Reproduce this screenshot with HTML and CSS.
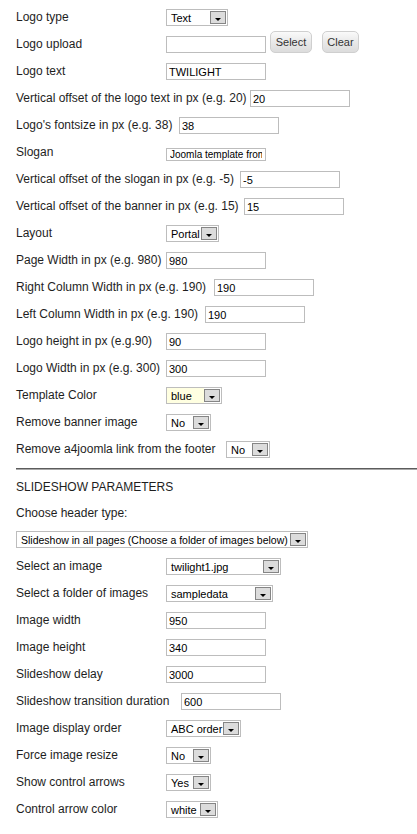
FILE: index.html
```html
<!DOCTYPE html>
<html>
<head>
<meta charset="utf-8">
<title>Template parameters</title>
<link rel="stylesheet" href="styles.css">
</head>
<body>
<form class="params">
  <div class="row"><label class="lbl">Logo type</label><div class="sel w62"><span class="val">Text</span><span class="arr"></span></div></div>
  <div class="row"><label class="lbl">Logo upload</label><input class="txt" type="text" value=""><button type="button" class="btn btn-select">Select</button><button type="button" class="btn btn-clear">Clear</button></div>
  <div class="row"><label class="lbl">Logo text</label><input class="txt" type="text" value="TWILIGHT"></div>
  <div class="row"><label class="lbl l230">Vertical offset of the logo text in px (e.g. 20)</label><input class="txt" type="text" value="20"></div>
  <div class="row"><label class="lbl l159">Logo's fontsize in px (e.g. 38)</label><input class="txt" type="text" value="38"></div>
  <div class="row"><label class="lbl">Slogan</label><input class="txt small" type="text" value="Joomla template from a4joomla"></div>
  <div class="row"><label class="lbl l220">Vertical offset of the slogan in px (e.g. -5)</label><input class="txt" type="text" value="-5"></div>
  <div class="row"><label class="lbl l224">Vertical offset of the banner in px (e.g. 15)</label><input class="txt" type="text" value="15"></div>
  <div class="row"><label class="lbl">Layout</label><div class="sel w53"><span class="val">Portal</span><span class="arr"></span></div></div>
  <div class="row"><label class="lbl">Page Width in px (e.g. 980)</label><input class="txt" type="text" value="980"></div>
  <div class="row"><label class="lbl l194">Right Column Width in px (e.g. 190)</label><input class="txt" type="text" value="190"></div>
  <div class="row"><label class="lbl l185">Left Column Width in px (e.g. 190)</label><input class="txt" type="text" value="190"></div>
  <div class="row"><label class="lbl">Logo height in px (e.g.90)</label><input class="txt" type="text" value="90"></div>
  <div class="row"><label class="lbl">Logo Width in px (e.g. 300)</label><input class="txt" type="text" value="300"></div>
  <div class="row"><label class="lbl">Template Color</label><div class="sel w56"><span class="val yellow">blue</span><span class="arr"></span></div></div>
  <div class="row"><label class="lbl">Remove banner image</label><div class="sel w45"><span class="val">No</span><span class="arr"></span></div></div>
  <div class="row"><label class="lbl l206">Remove a4joomla link from the footer</label><div class="sel w44"><span class="val">No</span><span class="arr"></span></div></div>
  <hr class="sep">
  <div class="row head"><span class="htxt">SLIDESHOW PARAMETERS</span></div>
  <div class="row head head2"><span class="htxt">Choose header type:</span></div>
  <div class="row"><div class="sel w292"><span class="val narrow">Slideshow in all pages (Choose a folder of images below)</span><span class="arr"></span></div></div>
  <div class="row"><label class="lbl">Select an image</label><div class="sel w115"><span class="val">twilight1.jpg</span><span class="arr"></span></div></div>
  <div class="row"><label class="lbl">Select a folder of images</label><div class="sel w107"><span class="val">sampledata</span><span class="arr"></span></div></div>
  <div class="row"><label class="lbl">Image width</label><input class="txt" type="text" value="950"></div>
  <div class="row"><label class="lbl">Image height</label><input class="txt" type="text" value="340"></div>
  <div class="row"><label class="lbl">Slideshow delay</label><input class="txt" type="text" value="3000"></div>
  <div class="row"><label class="lbl l161">Slideshow transition duration</label><input class="txt" type="text" value="600"></div>
  <div class="row"><label class="lbl">Image display order</label><div class="sel w75"><span class="val">ABC order</span><span class="arr"></span></div></div>
  <div class="row"><label class="lbl">Force image resize</label><div class="sel w45"><span class="val">No</span><span class="arr"></span></div></div>
  <div class="row"><label class="lbl">Show control arrows</label><div class="sel w45"><span class="val">Yes</span><span class="arr"></span></div></div>
  <div class="row"><label class="lbl">Control arrow color</label><div class="sel w52"><span class="val">white</span><span class="arr"></span></div></div>
</form>
</body>
</html>
```
FILE: styles.css
```css
html, body {
  margin: 0;
  padding: 0;
  background: #ffffff;
}
body {
  font-family: "Liberation Sans", Arial, sans-serif;
  font-size: 12px;
  color: #1e1e1e;
}
.params {
  display: flex;
  flex-direction: column;
  gap: 10px;
  padding: 9px 0 16px 16px;
}
.row {
  display: flex;
  align-items: center;
  gap: 4px;
  height: 17px;
}
.row.head {
  height: 16px;
}
.row.head2 {
  height: 15px;
}
.lbl {
  flex: none;
  width: 146px;
  line-height: 16px;
  margin-top: -2px;
  white-space: nowrap;
}
.l159 { width: 159px; }
.l161 { width: 161px; }
.l185 { width: 185px; }
.l194 { width: 194px; }
.l206 { width: 206px; }
.l220 { width: 220px; }
.l224 { width: 224px; }
.l230 { width: 230px; }
.htxt {
  line-height: 16px;
  margin-top: -2px;
}
.txt {
  box-sizing: border-box;
  width: 100px;
  height: 17px;
  margin: 0;
  padding: 0 2px;
  border: 1px solid #bdbdbd;
  font-family: "Liberation Sans", Arial, sans-serif;
  font-size: 11px;
  color: #000;
  background: #fff;
  outline: none;
}
.txt.small {
  height: 13px;
  font-size: 10px;
  align-self: flex-end;
  padding: 0 3px;
}
.btn {
  box-sizing: border-box;
  align-self: flex-start;
  margin-top: -5px;
  height: 22px;
  padding: 0;
  border: 1px solid #cfcfcf;
  border-radius: 5px;
  background: linear-gradient(#fafafa, #e9e9e9 50%, #dcdcdc);
  font-family: "Liberation Sans", Arial, sans-serif;
  font-size: 11px;
  color: #333;
}
.btn-select {
  width: 42px;
}
.btn-clear {
  width: 37px;
  margin-left: 6px;
}
.sel {
  box-sizing: border-box;
  display: flex;
  align-items: stretch;
  height: 17px;
  border: 1px solid #bdbdbd;
  padding: 1px 1px 1px 0;
  background: #fff;
  font-size: 11px;
  color: #000;
}
.val {
  flex: 1;
  padding-left: 4px;
  line-height: 14px;
  white-space: nowrap;
  overflow: hidden;
}
.val.narrow {
  font-size: 10.5px;
  padding-left: 4px;
}
.val.yellow {
  background: #ffffe1;
  margin: -1px 0 -1px 0;
  padding-top: 1px;
}
.arr {
  box-sizing: border-box;
  width: 16px;
  flex: none;
  border: 1px solid #858585;
  background: #dcdcdc;
  display: flex;
  align-items: center;
  justify-content: center;
  padding-top: 3px;
}
.arr::after {
  content: "";
  width: 0;
  height: 0;
  border-left: 3.5px solid transparent;
  border-right: 3.5px solid transparent;
  border-top: 3px solid #000;
}
.w44 { width: 44px; }
.w45 { width: 45px; }
.w52 { width: 52px; }
.w53 { width: 53px; }
.w56 { width: 56px; }
.w62 { width: 62px; }
.w75 { width: 75px; }
.w107 { width: 107px; }
.w115 { width: 115px; }
.w292 { width: 292px; }
.sep {
  box-sizing: border-box;
  height: 2px;
  margin: 0;
  border: 0;
  border-top: 1px solid #5c5c5c;
  border-bottom: 1px solid #a8a8a8;
}
```
